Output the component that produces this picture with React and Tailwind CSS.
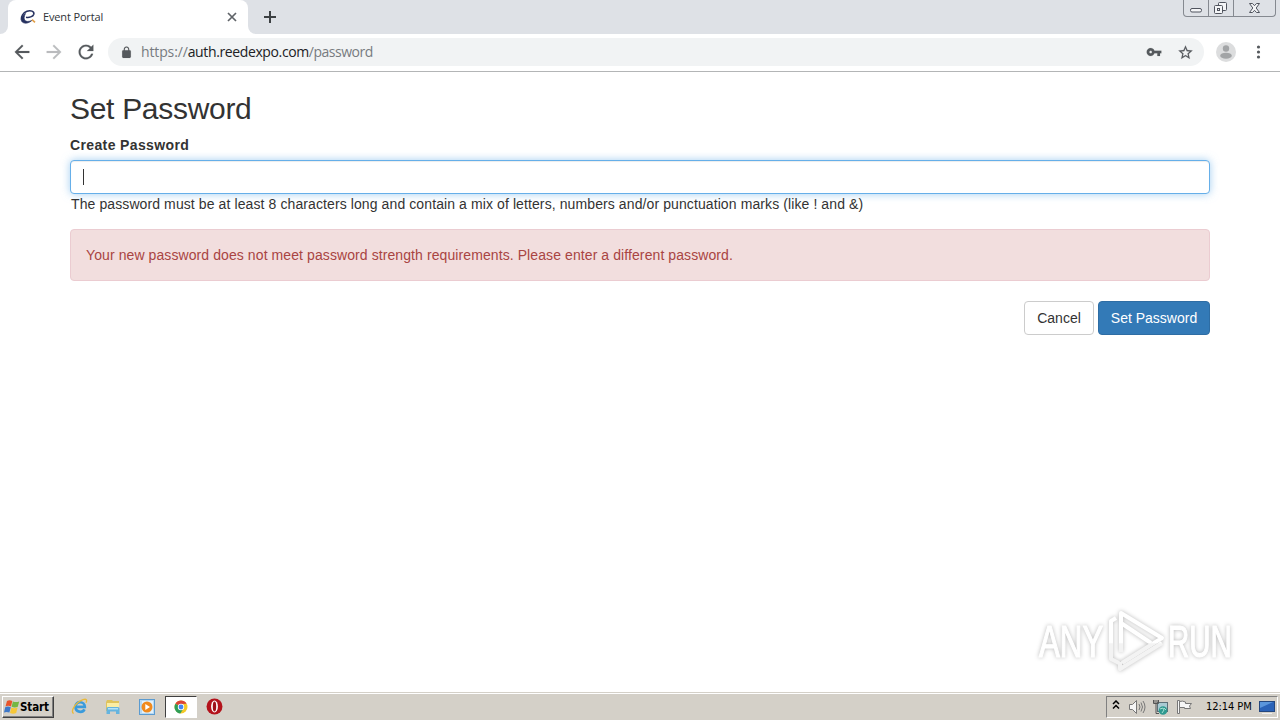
import React, { useState } from 'react'

const ICONS = {
  back: 'M20 11H7.83l5.59-5.59L12 4l-8 8 8 8 1.41-1.41L7.83 13H20v-2z',
  forward: 'M12 4l-1.41 1.41L16.17 11H4v2h12.17l-5.58 5.59L12 20l8-8z',
  reload: 'M17.65 6.35C16.2 4.9 14.21 4 12 4c-4.42 0-7.99 3.58-7.99 8s3.57 8 7.99 8c3.73 0 6.84-2.55 7.73-6h-2.08c-.82 2.33-3.04 4-5.65 4-3.31 0-6-2.69-6-6s2.69-6 6-6c1.66 0 3.14.69 4.22 1.78L13 11h7V4l-2.35 2.35z',
  lock: 'M18 8h-1V6c0-2.76-2.24-5-5-5S7 3.24 7 6v2H6c-1.1 0-2 .9-2 2v10c0 1.1.9 2 2 2h12c1.1 0 2-.9 2-2V10c0-1.1-.9-2-2-2zM15.1 8H8.900V6a3.1 3.1 0 0 1 6.2 0v2z',
  key: 'M12.65 10C11.83 7.67 9.61 6 7 6c-3.31 0-6 2.69-6 6s2.69 6 6 6c2.61 0 4.83-1.67 5.65-4H17v4h4v-4h2v-4H12.65zM7 14c-1.1 0-2-.9-2-2s.9-2 2-2 2 .9 2 2-.9 2-2 2z',
  star: 'M22 9.24l-7.19-.62L12 2 9.19 8.63 2 9.24l5.46 4.73L5.82 21 12 17.27 18.18 21l-1.63-7.03L22 9.24zM12 15.4l-3.76 2.27 1-4.28-3.32-2.88 4.38-.38L12 6.1l1.71 4.04 4.38.38-3.32 2.88 1 4.28L12 15.4z',
}

export default function App() {
  return (
    <div className="flex h-[720px] w-[1280px] flex-col overflow-hidden bg-white font-['Liberation_Sans',sans-serif] text-sm text-[#333]">
      <TabStrip />
      <Toolbar />
      <main className="relative flex-1">
        <PasswordForm />
        <Watermark />
      </main>
      <Taskbar />
    </div>
  )
}

function Icon({ name, size, className }) {
  return (
    <svg width={size} height={size} viewBox="0 0 24 24" fill="currentColor" stroke="currentColor" strokeWidth="0.2" className={className}>
      <path d={ICONS[name]} />
    </svg>
  )
}

function TabStrip() {
  return (
    <header className="flex h-[34px] shrink-0 items-start bg-[#dee1e6]">
      <div className="h-[34px] w-2 bg-white">
        <div className="h-full rounded-br-lg bg-[#dee1e6]" />
      </div>
      <div className="flex h-[34px] w-60 items-center rounded-t-lg bg-white pr-[10px] pl-3">
        <svg width="16" height="16" viewBox="0 0 16 16" fill="none">
          <path d="M6 8.200C9 8.800 13 7.800 13.800 5.200 14.600 2.300 10.500.9 7 2.300 3 3.900.8 7.500 1.500 10.500" stroke="#25305f" strokeWidth="1.500" />
          <path d="M5.500 4.500C1 7.300.3 11 2.300 13c2 1.800 6.300 1.600 9.500-1.500-3 1.300-5.800 1.300-7-.2-1.200-1.500-.8-4 .7-6.800z" fill="#25305f" stroke="#25305f" strokeWidth=".7" />
          <path d="M12 10.600l3 2.800" stroke="#e3a04a" strokeWidth="1.600" />
        </svg>
        <span className="ml-[7px] flex-1 font-['Open_Sans',sans-serif] text-[11px] tracking-[-0.15px] text-[#303438]">Event Portal</span>
        <svg width="12" height="12" viewBox="0 0 12 12" stroke="#5f6368" strokeWidth="1.700">
          <path d="M2 2l8 8M10 2l-8 8" />
        </svg>
      </div>
      <div className="h-[34px] w-2 bg-white">
        <div className="h-full rounded-bl-lg bg-[#dee1e6]" />
      </div>
      <svg className="mt-[10px] ml-[7px]" width="14" height="14" viewBox="0 0 14 14" stroke="#3c4043" strokeWidth="2">
        <path d="M7 1v12M1 7h12" />
      </svg>
      <WindowControls />
    </header>
  )
}

function WindowControls() {
  return (
    <div className="mr-[4px] ml-auto flex h-[17px] w-[93px] rounded-b-[4px] border border-t-0 border-[#858990] text-[#50545e]">
      <svg width="91" height="16" viewBox="0 0 91 16" fill="none" stroke="currentColor">
        <path d="M24.500 0v16M49.500 0v16" stroke="#858990" />
        <rect x="6.500" y="8.500" width="11" height="3.500" rx="1.500" fill="#f4f5f7" />
        <rect x="34.500" y="2.500" width="8" height="8" rx="1" fill="#f4f5f7" />
        <rect x="30.500" y="5.500" width="8" height="8" rx="1" fill="#f4f5f7" />
        <rect x="33.500" y="8.500" width="2" height="2" />
        <path d="M65.500 3.500h3l2 2.200 2-2.200h3l-3.300 4.500 3.300 4.500h-3l-2-2.200-2 2.200h-3l3.300-4.500z" fill="#f4f5f7" />
      </svg>
    </div>
  )
}

function Toolbar() {
  return (
    <nav className="flex h-[38px] shrink-0 items-center border-b border-[#b3b5b6] bg-white pb-px pl-[11px] text-[#55595d]">
      <Icon name="back" size={22} />
      <Icon name="forward" size={22} className="ml-[10px] text-[#babcbe]" />
      <Icon name="reload" size={22} className="ml-[10px]" />
      <div className="ml-[11px] flex h-7 w-[1096px] items-center rounded-full bg-[#f1f3f4] pr-[10px] pl-3">
        <Icon name="lock" size={13} />
        <div className="ml-2 flex flex-1 font-['Open_Sans',sans-serif] text-[14px] text-[#777b80]">
          <span className="tracking-[-0.13px]">https://</span>
          <span className="tracking-[-0.38px] text-[#202124]">auth.reedexpo.com</span>
          <span className="tracking-[-0.5px]">/password</span>
        </div>
        <Icon name="key" size={16} />
        <Icon name="star" size={17} className="ml-[15px]" />
      </div>
      <svg className="ml-3" width="20" height="20" viewBox="0 0 20 20">
        <circle cx="10" cy="10" r="10" fill="#dcddde" />
        <circle cx="10" cy="6.500" r="3.200" fill="#a2a4a6" />
        <ellipse cx="10" cy="13.700" rx="5.800" ry="3" fill="#a2a4a6" />
      </svg>
      <svg className="ml-5" width="5" height="16" viewBox="0 0 5 16" fill="currentColor">
        <circle cx="2.500" cy="3" r="1.600" />
        <circle cx="2.500" cy="8" r="1.600" />
        <circle cx="2.500" cy="13" r="1.600" />
      </svg>
    </nav>
  )
}

function PasswordForm() {
  const [password, setPassword] = useState('')

  return (
    <form className="mx-[70px] pt-5" onSubmit={e => e.preventDefault()}>
      <h1 className="text-[30px] leading-[33px] tracking-[-0.3px]">Set Password</h1>
      <label htmlFor="password" className="mt-[10px] block leading-5 font-bold tracking-[0.37px]">Create Password</label>
      <div className="mt-[5px] flex h-[34px] items-center rounded border border-[#66afe9] bg-white px-3 shadow-[inset_0_1px_1px_rgba(0,0,0,.075),0_0_8px_rgba(102,175,233,.6)]">
        <span className="h-4 w-px bg-[#333]" />
        <input
          id="password"
          type="password"
          value={password}
          onChange={e => setPassword(e.target.value)}
          className="h-full flex-1 outline-none"
        />
      </div>
      <p className="pl-px leading-5 tracking-[0.1px] whitespace-nowrap">
        The password must be at least 8 characters long and contain a mix of letters, numbers and/or punctuation marks (like ! and &amp;)
      </p>
      <div className="mt-[15px] flex h-[52px] items-center rounded border border-[#ebccd1] bg-[#f2dede] px-[15px] tracking-[0.09px] text-[#a94442]">
        <span>Your new password does not meet password strength requirements. Please enter a different password.</span>
      </div>
      <div className="mt-5 flex justify-end gap-1">
        <button type="button" className="h-[34px] w-[70px] rounded border border-[#ccc] bg-white">Cancel</button>
        <button className="h-[34px] w-[112px] rounded border border-[#2e6da4] bg-[#337ab7] text-white">Set Password</button>
      </div>
    </form>
  )
}

function Watermark() {
  return (
    <svg
      className="absolute top-[530px] left-[1026px] overflow-visible drop-shadow-[0_0_2px_rgba(0,0,0,0.28)]"
      width="220" height="78" viewBox="-8 -3 220 78" fill="none" stroke="url(#fade)" strokeWidth="4" strokeLinejoin="round"
    >
      <defs>
        <linearGradient id="fade" gradientUnits="userSpaceOnUse" x1="0" y1="0" x2="0" y2="72">
          <stop offset=".52" stopColor="#fff" />
          <stop offset=".54" stopColor="#f3f3f3" />
        </linearGradient>
      </defs>
      <g fill="url(#fade)" strokeWidth="1.2" fontFamily="Liberation Sans" fontSize="44">
        <text transform="translate(5 52) scale(.71 1)">ANY</text>
        <text transform="translate(134 52) scale(.67 1)">RUN</text>
      </g>
      <path d="M87 47V8l41 25-40 25" />
      <path d="M87 18l30 20" />
      <path d="M128 38L86 64v-7" />
      <path d="M82 13l-5 3v38l8 4" />
    </svg>
  )
}

function Taskbar() {
  return (
    <footer className="flex h-[28px] shrink-0 items-center border-t border-[#d4d0c8] bg-[#d4d0c8] shadow-[inset_0_1px_0_#fff]">
      <button className="mt-px ml-[2px] flex h-[22px] w-[52px] items-center border border-t-white border-r-[#404040] border-b-[#404040] border-l-white pl-px font-['DejaVu_Sans_Condensed','DejaVu_Sans',sans-serif] text-[11.5px] font-bold tracking-[-0.1px] text-black shadow-[inset_-1px_-1px_0_#808080]">
        <svg className="shrink-0" width="16" height="16" viewBox="0 0 16 16">
          <path d="M3 2q2.500-1.500 5.300 0L7 7.400q-2.800-1.400-5.500 0z" fill="#e8542a" />
          <path d="M8.900 2.400q3 1.300 6.300 0L13.800 7.800q-2.900 1.300-6.200 0z" fill="#74b743" />
          <path d="M1.200 8.200q2.700-1.400 5.600 0L5.400 13.600q-2.900-1.400-5.400 0z" fill="#3e78c8" />
          <path d="M7.400 8.600q3 1.300 6.200 0l-1.400 5.400q-3.100 1.300-6.200 0z" fill="#f6c738" />
        </svg>
        Start
      </button>
      <svg className="ml-[17px]" width="17" height="17" viewBox="0 0 17 17" fill="none">
        <path d="M13.500 11.300c-2 3.800-9 3.300-9-2.500 0-6.200 9.300-6 9.300 0H5" stroke="#3a9bdc" strokeWidth="2.700" />
        <path d="M2.700 15.500C-1.200 13.700 4.500 4.500 12 1.700c3.500-1.300 4.300.5 3 3" stroke="#e9b93a" strokeWidth="1.300" />
      </svg>
      <svg className="ml-[17px]" width="16" height="16" viewBox="0 0 16 16">
        <path d="M1 3l1-2h5l1 1h6v10H1z" fill="#dfc35d" />
        <path d="M2 4h12v7H2z" fill="#faeda4" />
        <path d="M1.500 15V9.500q0-1.500 1.500-1.500h10q1.500 0 1.500 1.500V15h-3.500v-2.500h-6V15z" fill="#65b4df" />
        <path d="M3 9h10v1.500H3z" fill="#b3e2f7" />
      </svg>
      <svg className="ml-[18px]" width="16" height="16" viewBox="0 0 16 16">
        <rect x=".5" y=".5" width="15" height="15" fill="#b6d9f3" stroke="#5b9bd0" />
        <rect x="3" y="2" width="11" height="12" fill="#e2f1fb" />
        <circle cx="8" cy="8" r="5.500" fill="#f08a1d" />
        <path d="M6.300 5v6L11 8z" fill="#fff" />
      </svg>
      <div className="mt-px ml-[10px] flex h-[22px] w-[32px] items-center justify-center border border-t-[#404040] border-r-white border-b-white border-l-[#404040] bg-white">
        <svg width="14" height="14" viewBox="0 0 14 14">
          <circle cx="7" cy="7" r="6.500" fill="#f4c928" />
          <path d="M7 7L1.400 3.700A6.500 6.500 0 0 1 12.600 3.700L7 4z" fill="#db4437" />
          <path d="M7 7L1.400 3.700A6.500 6.500 0 0 0 6.300 13.500L9.500 8.500z" fill="#2f9e57" />
          <circle cx="7" cy="7" r="3.200" fill="#fff" />
          <circle cx="7" cy="7" r="2.400" fill="#4285f4" />
        </svg>
      </div>
      <svg className="ml-[9px]" width="17" height="17" viewBox="0 0 16 16">
        <circle cx="8" cy="8" r="7.500" fill="#b3121b" />
        <ellipse cx="8" cy="8" rx="3.200" ry="5.600" fill="#fff" />
        <ellipse cx="8" cy="8" rx="1.600" ry="4.800" fill="#a01018" />
      </svg>
      <Tray />
    </footer>
  )
}

function Tray() {
  return (
    <div className="mt-px mr-[2px] ml-auto flex h-[22px] w-[172px] items-center border border-t-[#808080] border-r-white border-b-white border-l-[#808080] pl-[5px] text-black">
      <svg className="-mt-1" width="8" height="10" viewBox="0 0 8 10" fill="none" stroke="currentColor" strokeWidth="1.500">
        <path d="M1 4l3-3 3 3M1 8.500l3-3 3 3" />
      </svg>
      <svg className="ml-[8px]" width="18" height="16" viewBox="0 0 18 16" fill="none" stroke="#777">
        <path d="M1.500 5.500h3l4-4v13l-4-4h-3z" fill="#f5f5f5" />
        <path d="M11 5q2 3 0 6M13 3.500q3 4.500 0 9M15 2q4 6 0 12" />
      </svg>
      <svg className="ml-[6px]" width="17" height="17" viewBox="0 0 17 17" fill="none">
        <rect x="5.500" y="3.500" width="10" height="9" fill="#a9cbd3" stroke="#5c7078" />
        <path d="M1.500 1v3.500h5V1M3 1v3M5 1v3M4 5v9.500h3" stroke="#555" />
        <circle cx="11" cy="11.500" r="4.300" fill="#2f9a90" />
        <path d="M8 10l3-1 1 2-2 3M12 9l2 2" stroke="#a7e1d3" />
      </svg>
      <svg className="ml-[7px]" width="17" height="16" viewBox="0 0 17 16" fill="#f6f6f6" stroke="#777">
        <path d="M1.500 1.500h2v13h-2z" />
        <path d="M3.500 2.500q3-1 6 .5v1.500h6l-2 2.500 1 2.500H8.500V8.500h-5z" />
      </svg>
      <span className="ml-[13px] w-[49px] font-['DejaVu_Sans_Condensed','DejaVu_Sans',sans-serif] text-[11px] tracking-[-0.05px] whitespace-nowrap">12:14 PM</span>
      <svg className="ml-[4px]" width="16" height="16" viewBox="0 0 16 16">
        <rect x=".5" y="2.500" width="15" height="10" fill="#2b63b8" stroke="#24477e" />
        <path d="M1 3h13L1 9z" fill="#5b96dc" />
        <path d="M3 14.500h10" stroke="#eee" />
      </svg>
    </div>
  )
}
